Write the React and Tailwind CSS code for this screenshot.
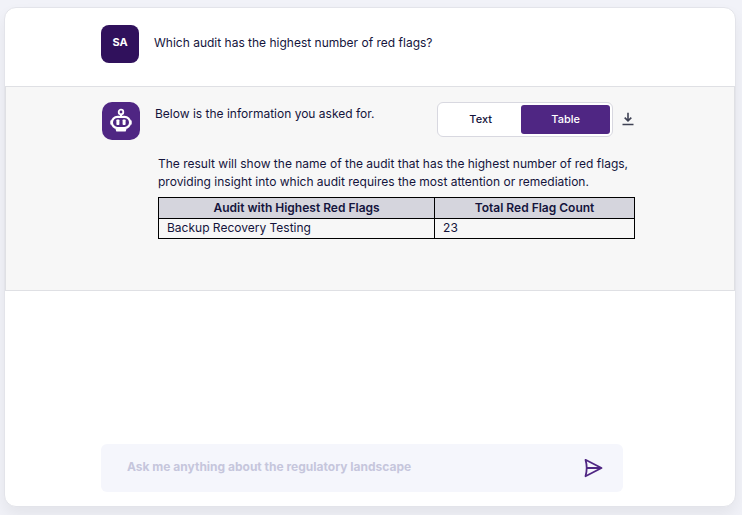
import React, { useState } from "react";

const rows = [{ audit: "Backup Recovery Testing", count: 23 }];

function BotIcon() {
  return (
    <svg width="24" height="26" viewBox="0 0 24 26" fill="none" aria-hidden="true">
      <circle cx="12" cy="4" r="2.3" stroke="#fff" strokeWidth="1.8" />
      <path d="M12 6.5v2" stroke="#fff" strokeWidth="2" />
      <path d="M8.5 8.8h7a5.6 5.6 0 0 1 0 11.2h-7a5.6 5.6 0 0 1 0-11.2z" stroke="#fff" strokeWidth="2.2" />
      <path d="M1.3 12.5h2v4h-2zM20.7 12.5h2v4h-2z" fill="#fff" />
      <rect x="7.4" y="11.5" width="3" height="5.6" rx=".8" fill="#fff" />
      <rect x="13.6" y="11.5" width="3" height="5.6" rx=".8" fill="#fff" />
      <path d="M7 20.5l.8 2.5h8.4l.8-2.5" fill="#fff" stroke="#fff" strokeWidth="1.2" strokeLinejoin="round" />
    </svg>
  );
}

function DownloadIcon() {
  return (
    <svg width="12" height="14" viewBox="0 0 12 14" fill="none" stroke="#3f4254" strokeWidth="1.6" aria-hidden="true">
      <path d="M6 .8v8M2.7 5.6L6 8.9l3.3-3.3M.5 12.5h11" />
    </svg>
  );
}

function SendIcon() {
  return (
    <svg width="20" height="20" viewBox="0 0 20 20" fill="none" stroke="#4f2683" strokeWidth="1.8" strokeLinejoin="round" aria-hidden="true">
      <path d="M2.5 1.8L18.5 10 2.5 18.2Q4.9 10 2.5 1.8zM4 10h14" />
    </svg>
  );
}

function ViewToggle({ view, onChange }) {
  return (
    <div className="grid h-[35px] w-44 shrink-0 grid-cols-[11fr_12fr] rounded-md border border-[#d8d8e0] bg-white p-0.5 text-[11px] font-medium">
      {["Text", "Table"].map(v => (
        <button
          key={v}
          type="button"
          aria-pressed={view === v}
          onClick={() => onChange(v)}
          className={`rounded-[3px] pb-0.5 ${view === v ? "bg-[#4f2683] text-white" : "text-[#14143c]"}`}
        >
          {v}
        </button>
      ))}
    </div>
  );
}

function ResultTable() {
  return (
    <table className="mt-1.5 w-full border-collapse border border-black text-left">
      <thead>
        <tr className="bg-[#d5d5dd] text-center">
          <th className="w-[58%] border border-black px-2 py-px font-semibold">Audit with Highest Red Flags</th>
          <th className="border border-black px-2 py-px font-semibold">Total Red Flag Count</th>
        </tr>
      </thead>
      <tbody>
        {rows.map(r => (
          <tr key={r.audit}>
            <td className="border border-black px-2 pb-px">{r.audit}</td>
            <td className="border border-black px-2 pb-px">{r.count}</td>
          </tr>
        ))}
      </tbody>
    </table>
  );
}

export default function App() {
  const [view, setView] = useState("Table");
  const [question, setQuestion] = useState("");

  return (
    <div className="flex min-h-screen bg-[#f1f2f8] pt-[7px] pr-1.5 pb-2 pl-1 font-['Inter',sans-serif] text-[12px] leading-[18px] text-[#14143c]">
      <main className="flex flex-1 flex-col rounded-xl border border-[#e3e4ea] bg-white shadow-[0_8px_16px_rgba(0,0,0,0.06)]">
        <section className="flex gap-[15px] px-24 pt-[17px] pb-[23px]">
          <div className="flex size-[38px] shrink-0 items-center justify-center rounded-lg bg-[#30115c] pb-1 text-[11px] font-bold text-white">SA</div>
          <p className="pt-[9px]">Which audit has the highest number of red flags?</p>
        </section>

        <section className="border border-[#dfe0e4] bg-[#f7f7f7] pr-[99px] pb-[51px] pl-24 pt-[15px]">
          <div className="flex">
            <div className="mr-[15px] flex size-[38px] shrink-0 items-center justify-center rounded-[10px] bg-[#4f2683]">
              <BotIcon />
            </div>
            <p className="flex-1 pt-[3px]">Below is the information you asked for.</p>
            <ViewToggle view={view} onChange={setView} />
            <button type="button" aria-label="Download" className="ml-[9px] self-center pr-px pb-1">
              <DownloadIcon />
            </button>
          </div>
          <div className="mt-[15px] pl-14">
            <p>
              The result will show the name of the audit that has the highest number of red flags, providing insight into which audit requires the most attention or remediation.
            </p>
            {view === "Table" && <ResultTable />}
          </div>
        </section>

        <form
          onSubmit={e => e.preventDefault()}
          className="mt-auto mr-[112px] mb-3.5 ml-24 flex h-12 items-center rounded-md bg-[#f5f6fc] pr-5 pl-[26px]"
        >
          <input
            type="text"
            aria-label="Question"
            placeholder="Ask me anything about the regulatory landscape"
            value={question}
            onChange={e => setQuestion(e.target.value)}
            className="min-w-0 flex-1 bg-transparent pb-0.5 font-bold outline-none placeholder:text-[#c6c6dc]"
          />
          <button type="submit" aria-label="Send">
            <SendIcon />
          </button>
        </form>
      </main>
    </div>
  );
}
